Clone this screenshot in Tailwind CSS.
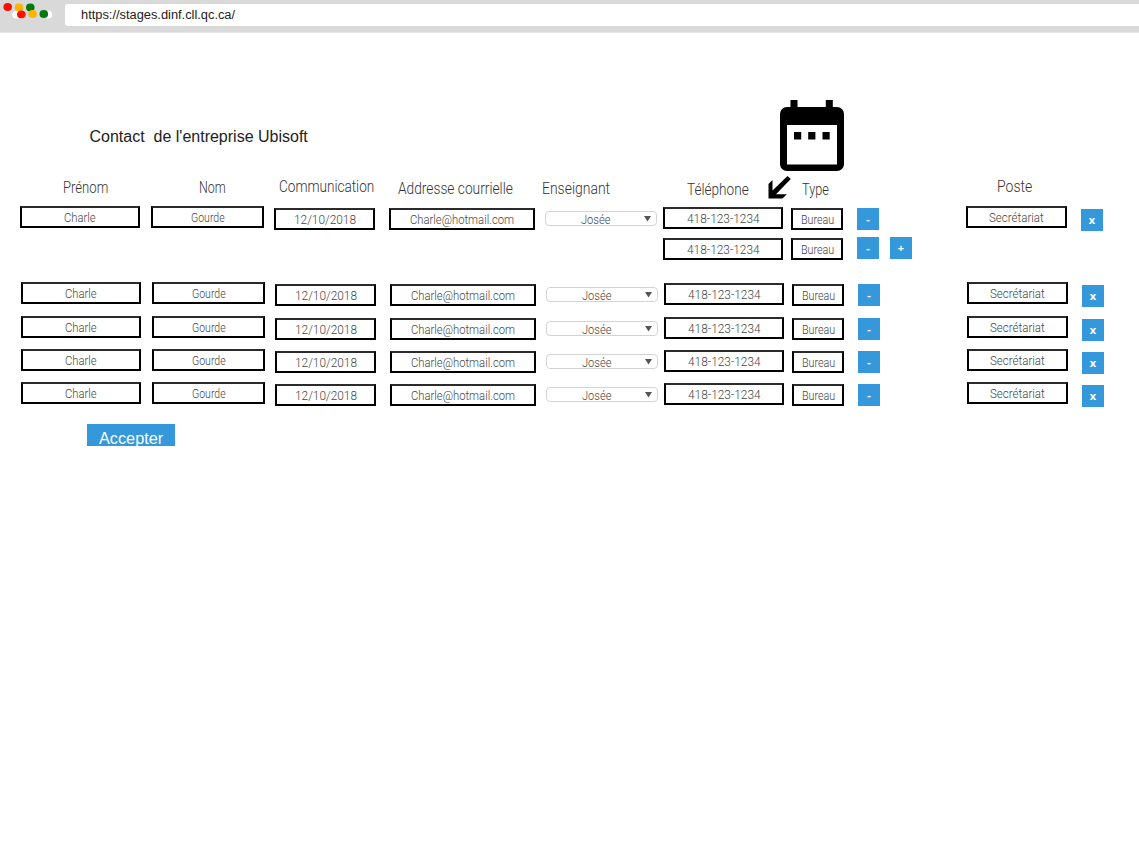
<!DOCTYPE html>
<html lang="fr">
<head>
<meta charset="utf-8">
<title>Contacts</title>
<script src="https://cdn.jsdelivr.net/npm/@tailwindcss/browser@4"></script>
</head>
<body class="bg-white font-['Roboto',sans-serif] w-[1139px] h-[850px] overflow-hidden">
<header class="flex h-[33px] bg-[#d9d9d9] border-b border-[#e8e8e8]">
  <svg class="w-[65px] h-8 shrink-0" viewBox="0 0 65 32">
    <ellipse cx="16.500" cy="14.600" rx="4.300" ry="3.900" fill="#fff"/>
    <ellipse cx="48" cy="14.600" rx="4.300" ry="3.900" fill="#fff"/>
    <ellipse cx="7.700" cy="7" rx="4.300" ry="3.900" fill="#ff0f00"/>
    <ellipse cx="19" cy="7.500" rx="4.300" ry="3.900" fill="#ffb400"/>
    <ellipse cx="30.300" cy="7.500" rx="4.300" ry="3.900" fill="#007a10"/>
    <ellipse cx="21.300" cy="14.300" rx="4.300" ry="3.900" fill="#ff0f00"/>
    <ellipse cx="32.600" cy="14" rx="4.300" ry="3.900" fill="#ffb400"/>
    <ellipse cx="43.800" cy="14" rx="4.300" ry="3.900" fill="#007a10"/>
  </svg>
  <div class="mt-1 h-[22px] grow rounded-l-[3px] bg-white pl-4 text-[12.500px] leading-[22px] text-[#222] font-['Liberation_Sans',sans-serif]">
    <div class="w-[154px]"><span data-fit class="inline-block origin-left whitespace-nowrap">https://stages.dinf.cll.qc.ca/</span></div>
  </div>
</header>

<section class="mt-[67px] flex h-[76px] items-start">
  <h1 class="ml-[89.500px] mt-[25px] w-[218px] text-[16px] leading-6 text-[#222] font-['Liberation_Sans',sans-serif]"><span data-fit class="inline-block origin-left whitespace-pre">Contact  de l'entreprise Ubisoft</span></h1>
  <svg class="ml-[472px] h-[72px] w-[64px]" viewBox="0 0 64 72">
    <path fill-rule="evenodd" d="M10.500 0h7v7h28.300V0h7v7H57a7 7 0 0 1 7 7v50a7 7 0 0 1-7 7H7a7 7 0 0 1-7-7V14a7 7 0 0 1 7-7h3.500zM7 25v39.500h50V25z"/>
    <path d="M14 32h7.200v7.500H14zM28.200 32h7.200v7.500h-7.200zM42.500 32h7.200v7.500h-7.200z"/>
  </svg>
</section>

<div class="flex h-[30px] items-start text-[16px] leading-6 font-light text-[#333]">
  <div class="ml-[63px] w-[45px]"><span data-fit class="inline-block origin-left whitespace-nowrap">Prénom</span></div>
  <div class="ml-[91px] w-[27px]"><span data-fit class="inline-block origin-left whitespace-nowrap">Nom</span></div>
  <div class="ml-[53px] mt-[-1px] w-[95px]"><span data-fit class="inline-block origin-left whitespace-nowrap">Communication</span></div>
  <div class="ml-6 mt-px w-[115px]"><span data-fit class="inline-block origin-left whitespace-nowrap">Addresse courrielle</span></div>
  <div class="ml-[29px] mt-px w-[68px]"><span data-fit class="inline-block origin-left whitespace-nowrap">Enseignant</span></div>
  <div class="ml-[77px] mt-[2px] w-[62px]"><span data-fit class="inline-block origin-left whitespace-nowrap">Téléphone</span></div>
  <svg class="ml-[19px] h-[23px] w-[24px]" viewBox="0 0 24 23"><path d="M0.500 22.500V8L4.500 4v10.500L19.500 0l3.300 3L8 18.200H18.800l-4.300 4.300z"/></svg>
  <div class="ml-[10px] mt-[2px] w-[27px]"><span data-fit class="inline-block origin-left whitespace-nowrap">Type</span></div>
  <div class="ml-[168px] mt-[-1px] w-[35px]"><span data-fit class="inline-block origin-left whitespace-nowrap">Poste</span></div>
</div>

<main id="rows"></main>

<button class="mt-[9px] ml-[87px] flex h-[22px] w-[88px] items-start overflow-hidden bg-[#3498db] text-left text-[16px] leading-[29px] text-white font-['Liberation_Sans',sans-serif]"><span class="ml-3 block w-[64px]"><span data-fit class="inline-block origin-left whitespace-nowrap">Accepter</span></span></button>

<script>
const cell = (text, box, width) => `<div class="${box} flex h-[22px] shrink-0 justify-center border-2 border-black border-t-[#2b2b2b] leading-[19px]"><div class="${width}"><span data-fit class="inline-block origin-left whitespace-nowrap">${text}</span></div></div>`;
const button = (text, box) => `<button class="${box} flex h-[22px] w-[22px] shrink-0 items-center justify-center bg-[#3498db] text-[11px] font-bold text-white font-['Open_Sans',sans-serif]">${text}</button>`;
const row = (height, left, first) => `
<div class="flex items-start ${height} ${left} text-[13px] font-light text-[#444]">
  ${cell('Charle', 'w-[120px]', 'w-[32px]')}
  ${cell('Gourde', 'ml-[11px] w-[113px]', 'w-[34px]')}
  ${cell('12/10/2018', 'ml-[10px] mt-[2px] w-[101px]', 'w-[62px]')}
  ${cell('Charle@hotmail.com', 'ml-[14px] mt-[2px] w-[146px]', 'w-[104px]')}
  <div class="ml-[10px] mt-[5px] flex h-[15px] w-[112px] shrink-0 rounded-[4px] border border-[#d4d4d4] leading-[15px]">
    <div class="ml-[35px] w-[29px] shrink-0"><span data-fit class="inline-block origin-left whitespace-nowrap">Josée</span></div>
    <svg class="ml-[34px] mt-1 h-[6px] w-[7px] shrink-0" viewBox="0 0 7 6"><path d="M0 0h7L3.500 5.500z" fill="#555"/></svg>
  </div>
  <div class="ml-[6px] mt-px flex flex-col gap-[9px]">
    ${cell('418-123-1234', 'w-[120px]', 'w-[73px]')}
    ${first ? cell('418-123-1234', 'w-[120px]', 'w-[73px]') : ''}
  </div>
  <div class="ml-2 mt-[2px] flex flex-col gap-2">
    ${cell('Bureau', 'w-[52px]', 'w-[33px]')}
    ${first ? cell('Bureau', 'w-[52px]', 'w-[33px]') : ''}
  </div>
  <div class="ml-[14px] mt-[2px] flex w-[55px] flex-col gap-[7px]">
    ${button('-', '')}
    ${first ? `<div class="flex gap-[11px]">${button('-', '')}${button('+', '')}</div>` : ''}
  </div>
  ${cell('Secrétariat', 'ml-[54px] w-[101px]', 'w-[55px]')}
  ${button('x', 'ml-[14px] mt-[3px]')}
</div>`;
document.getElementById('rows').innerHTML =
  row('h-[76px]', 'pl-5', true) +
  row('h-[34px]', 'pl-[21px]') +
  row('h-[33px]', 'pl-[21px]') +
  row('h-[33px]', 'pl-[21px]') +
  row('h-[33px]', 'pl-[21px]');
// Condense each label to the width of its box, again whenever either is resized.
const fit = s => { if (s.offsetWidth) s.style.transform = `scaleX(${s.parentElement.clientWidth / s.offsetWidth})`; };
const watcher = new ResizeObserver(() => document.querySelectorAll('[data-fit]').forEach(fit));
document.querySelectorAll('[data-fit]').forEach(s => { watcher.observe(s); watcher.observe(s.parentElement); });
</script>
</body>
</html>
